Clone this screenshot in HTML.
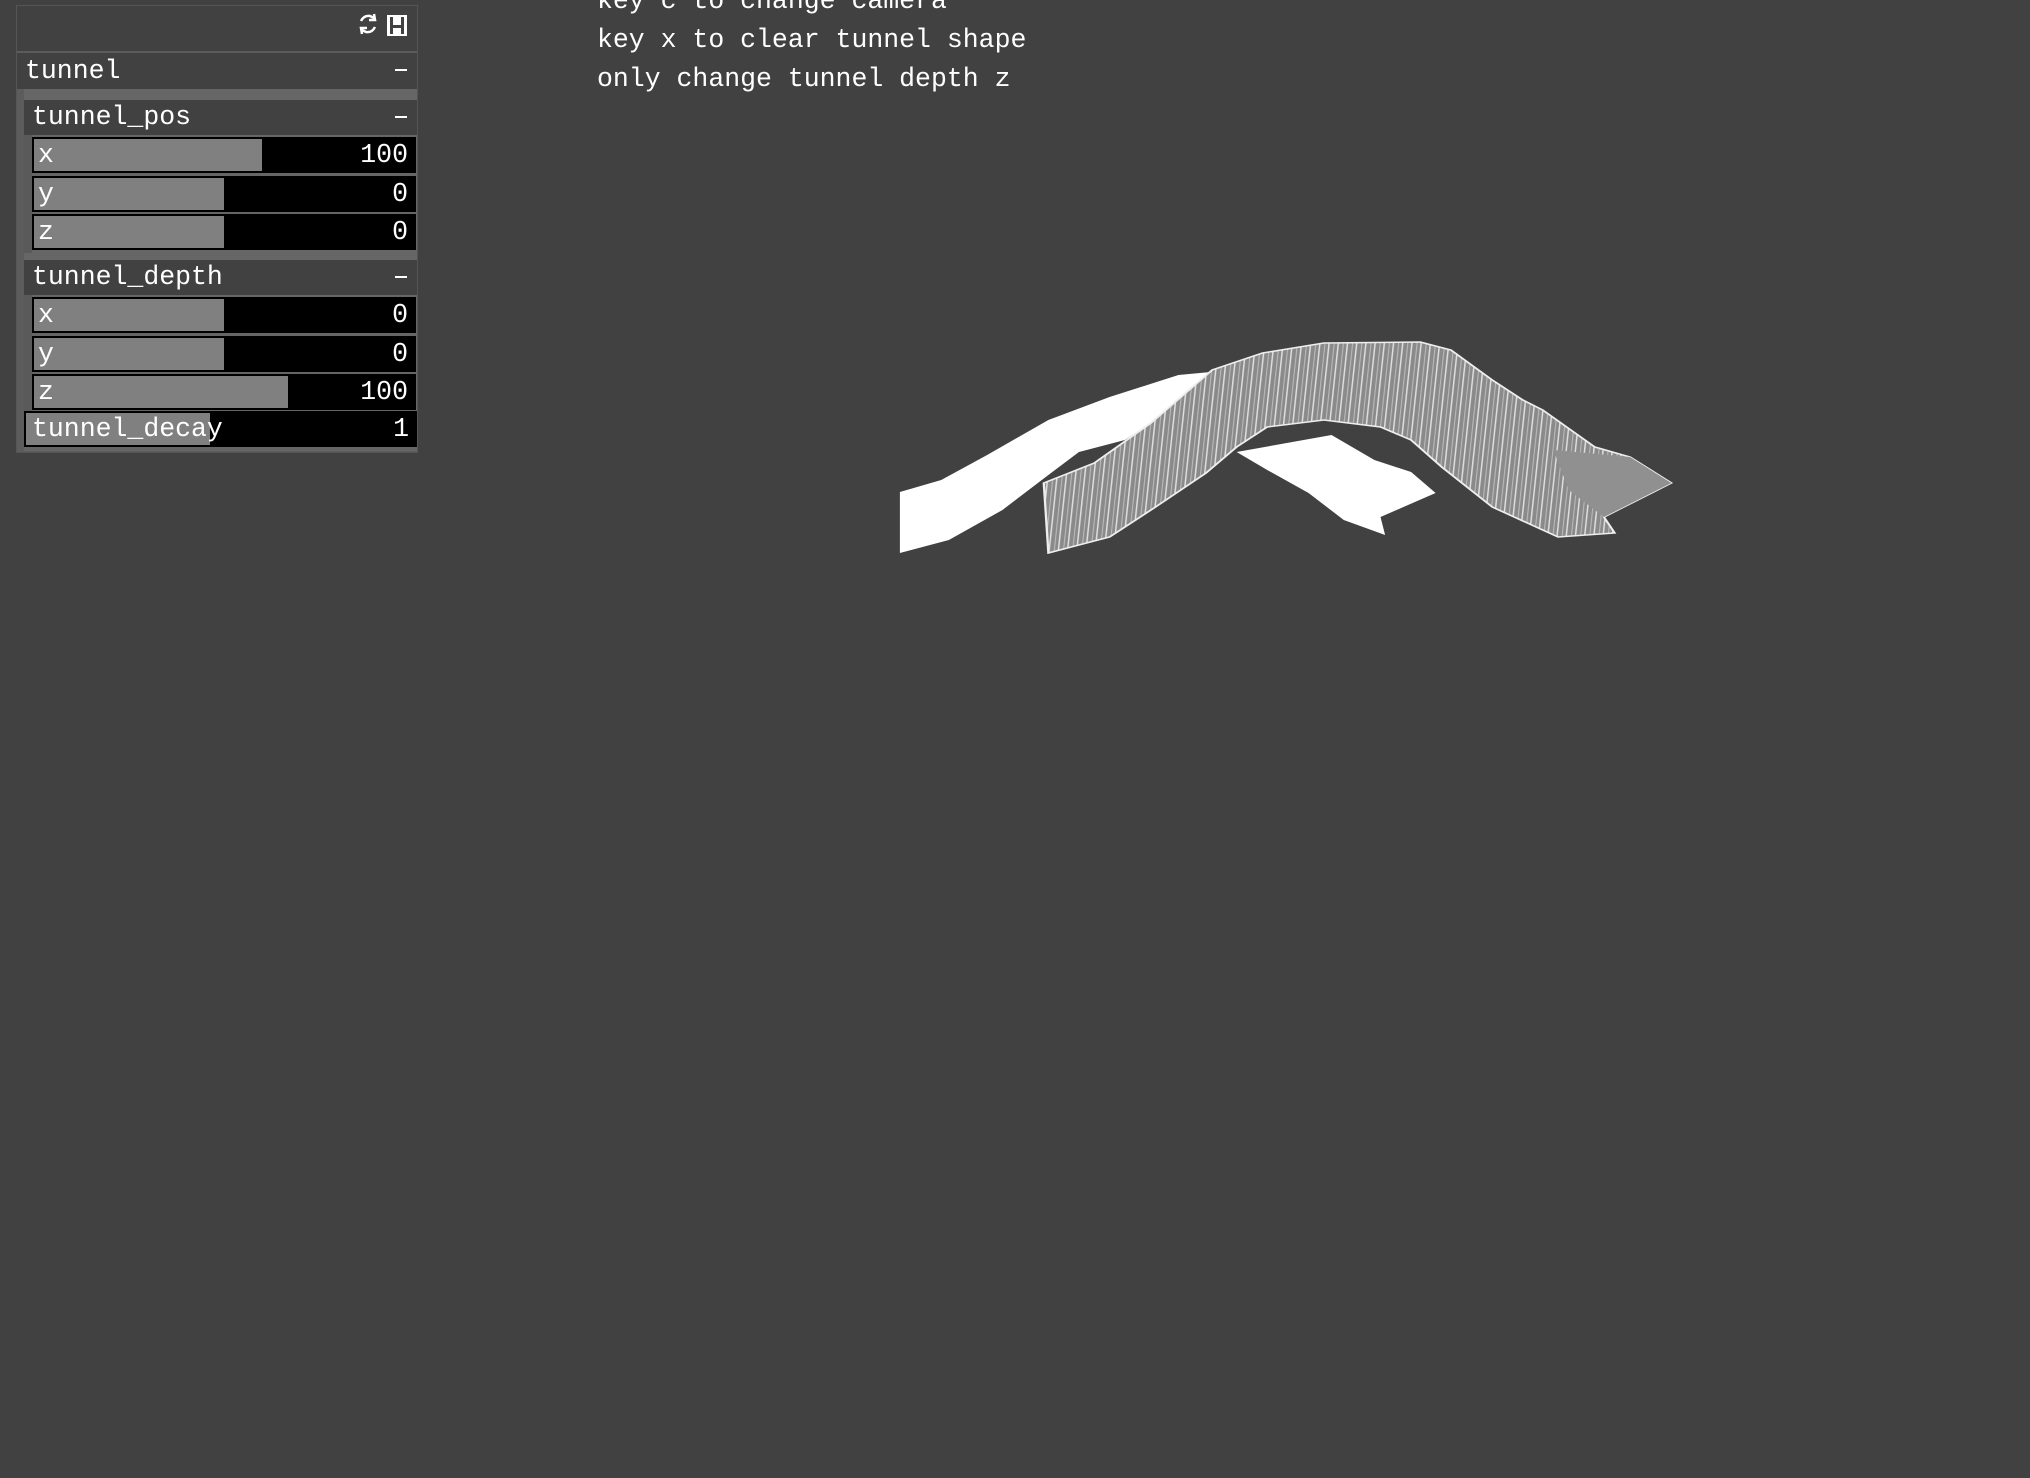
<!DOCTYPE html>
<html><head><meta charset="utf-8"><style>
*{margin:0;padding:0;box-sizing:border-box}
body{width:2030px;height:1478px;background:#414141;position:relative;overflow:hidden;font-family:"Liberation Mono","DejaVu Sans Mono",monospace;color:#fff;font-size:26.5px}
.a{position:absolute}
.t{position:absolute;white-space:pre;line-height:39px}
.sl{position:absolute;left:32px;width:384px;height:36px;background:#000;border:2px solid #000}
.sl .f{position:absolute;left:0;top:0;bottom:0;background:#808080}
.sl .l{position:absolute;left:4px;top:0;line-height:32px;color:#fff}
.sl .v{position:absolute;right:6px;top:0;line-height:32px}
.hd{position:absolute;background:#414141;line-height:35px;padding-left:8px}
.mn{position:absolute;right:10px;top:16px;width:12px;height:2px;background:#fff}
</style></head><body>
<div class="t" style="left:597px;top:-18px">key c to change camera</div>
<div class="t" style="left:597px;top:21px">key x to clear tunnel shape</div>
<div class="t" style="left:597px;top:60px">only change tunnel depth z</div>

<div class="a" style="left:16px;top:5px;width:402px;height:448px;background:#5c5c5c;border:1px solid #555"></div>
<div class="a" style="left:17px;top:6px;width:400px;height:45px;background:#414141"></div>
<svg class="a" style="left:355px;top:12px" width="26" height="24" viewBox="0 0 26 24"><path d="M6 9 Q9 3 15 4 L19 6 M19 2 L20 8 L14 8 M20 15 Q17 21 11 20 L7 18 M7 22 L6 16 L12 16" stroke="#fff" stroke-width="2.5" fill="none"/></svg>
<div class="a" style="left:387px;top:15px;width:20px;height:21px;background:#fff"></div>
<div class="a" style="left:390px;top:17px;width:3px;height:17px;background:#414141"></div>
<div class="a" style="left:401px;top:17px;width:3px;height:17px;background:#414141"></div>
<div class="a" style="left:393px;top:25px;width:8px;height:3px;background:#414141"></div>

<div class="hd" style="left:17px;top:53px;width:400px;height:36px;line-height:36px">tunnel<div class="mn"></div></div>
<div class="a" style="left:17px;top:89px;width:400px;height:362px;background:#666"></div>
<div class="a" style="left:17px;top:89px;width:7px;height:362px;background:#5c5c5c"></div>

<div class="hd" style="left:24px;top:100px;width:393px;height:35px">tunnel_pos<div class="mn"></div></div>
<div class="a" style="left:24px;top:135px;width:8px;height:118px;background:#5a5a5a"></div>
<div class="sl" style="top:137px"><div class="f" style="width:228px"></div><span class="l">x</span><span class="v">100</span></div>
<div class="sl" style="top:176px"><div class="f" style="width:190px"></div><span class="l">y</span><span class="v">0</span></div>
<div class="sl" style="top:214px"><div class="f" style="width:190px"></div><span class="l">z</span><span class="v">0</span></div>

<div class="hd" style="left:24px;top:260px;width:393px;height:35px">tunnel_depth<div class="mn"></div></div>
<div class="a" style="left:24px;top:295px;width:8px;height:116px;background:#5a5a5a"></div>
<div class="sl" style="top:297px"><div class="f" style="width:190px"></div><span class="l">x</span><span class="v">0</span></div>
<div class="sl" style="top:336px"><div class="f" style="width:190px"></div><span class="l">y</span><span class="v">0</span></div>
<div class="sl" style="top:374px"><div class="f" style="width:254px"></div><span class="l">z</span><span class="v">100</span></div>
<div class="sl" style="left:24px;width:393px;top:411px"><div class="f" style="width:184px"></div><span class="l" style="left:6px">tunnel_decay</span><span class="v">1</span></div>

<svg class="a" style="left:0;top:0" width="2030" height="1478">
<defs><pattern id="p" width="6" height="40" patternUnits="userSpaceOnUse" patternTransform="rotate(4)"><rect width="6" height="40" fill="#8a8a8a"/><rect x="0" width="1" height="40" fill="#ddd"/><rect x="3.5" width="0.7" height="40" fill="#bbb"/></pattern></defs>
<g transform="translate(880,0) scale(1.5306,1) translate(-880,0)">
<polygon fill="#fff" points="893,492 920,480 950,455 990,420 1030,397 1075,375 1110,370 1120,372 1100,395 1060,420 1040,440 1010,452 990,475 960,510 925,540 893,553"/>
<polygon fill="#fff" points="1113,452 1175,435 1203,460 1227,472 1243,493 1207,517 1210,535 1183,520 1160,493 1133,470"/>
<polygon fill="url(#p)" stroke="#eee" stroke-width="1.5" points="987,483 1020,463 1057,423 1097,370 1130,353 1170,343 1233,342 1253,350 1280,380 1300,400 1313,410 1347,447 1370,457 1397,483 1353,517 1360,533 1323,537 1280,507 1247,467 1227,440 1207,427 1170,420 1133,427 1113,447 1093,473 1060,507 1030,537 990,553"/>
<polygon fill="#909090" points="1320,450 1370,457 1397,483 1353,517 1330,490"/>
</g>
</svg>
</body></html>
